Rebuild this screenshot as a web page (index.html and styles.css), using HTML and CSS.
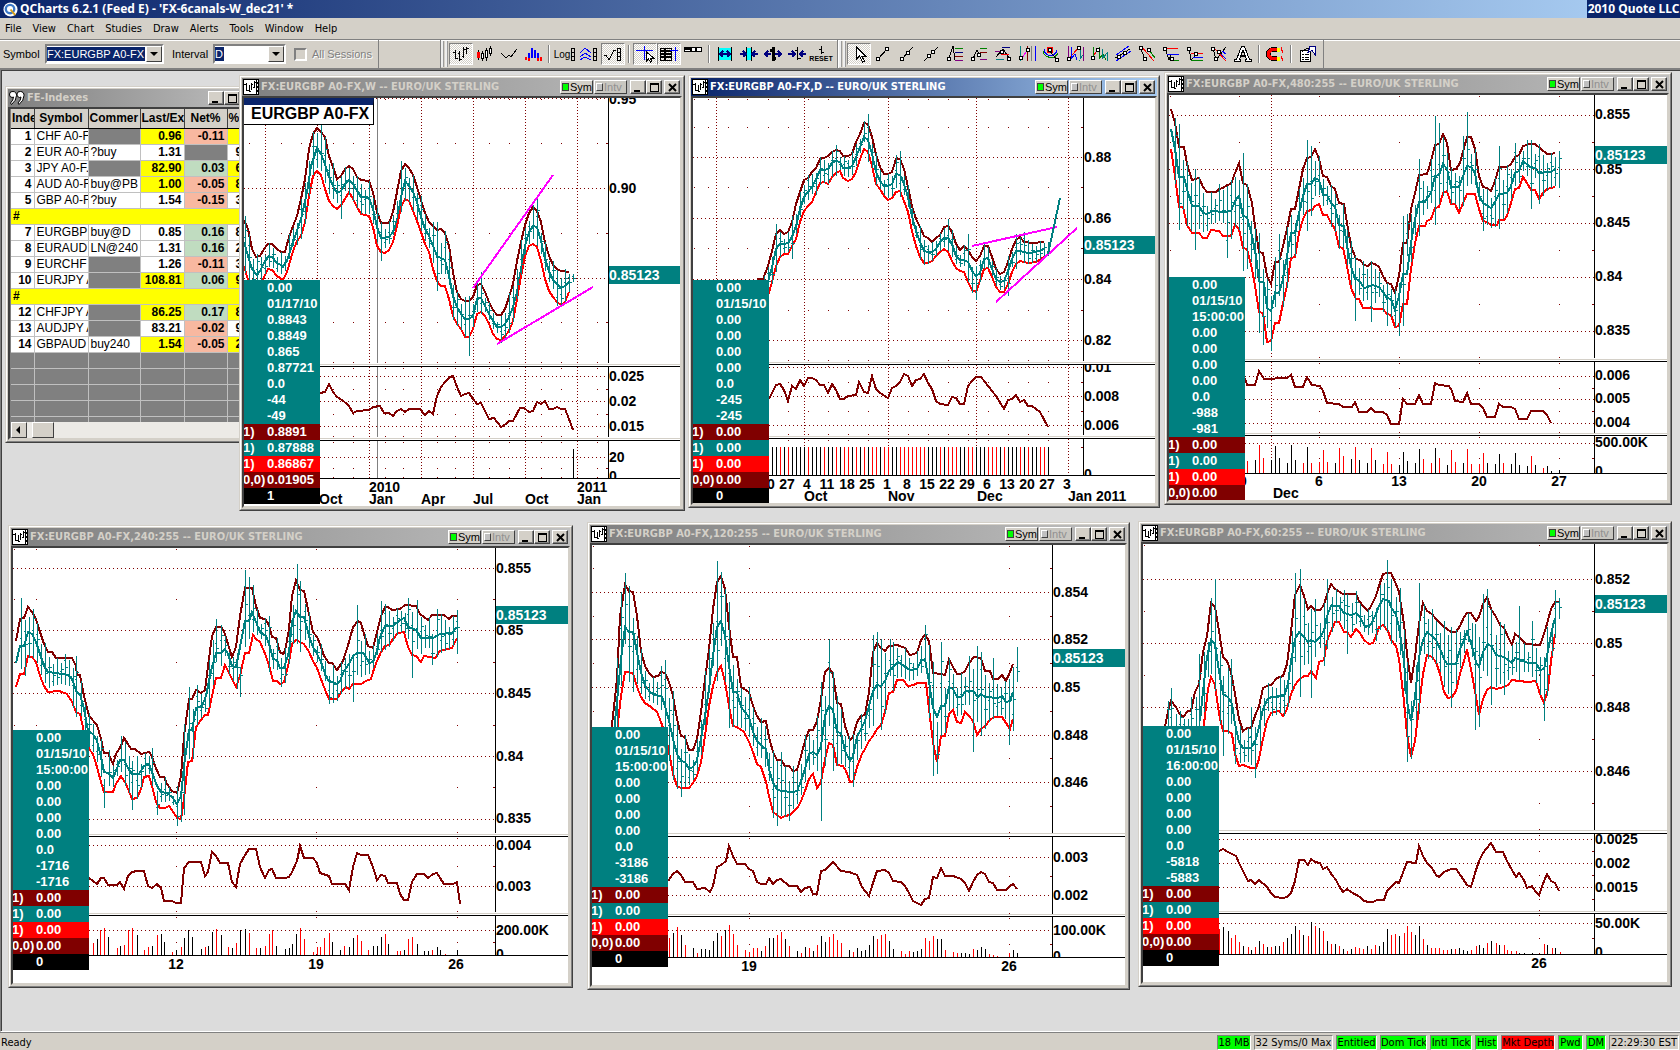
FILE: index.html
```html
<!DOCTYPE html>
<html lang="en">
<head>
<meta charset="utf-8">
<title>QCharts 6.2.1</title>
<link rel="stylesheet" href="styles.css">
</head>
<body>
<header class="app-title">
  <svg class="app-logo" viewBox="0 0 16 16"><circle cx="8" cy="8" r="7.5" fill="#fff"/><circle cx="7.500" cy="7.500" r="4.500" fill="none" stroke="#3c78c8" stroke-width="2.500"/><path d="M8 8l5 6" stroke="#d8a018" stroke-width="2"/></svg>
  <h1>QCharts 6.2.1 (Feed E) - 'FX-6canals-W_dec21' *</h1>
  <span class="brand">2010 Quote LLC</span>
</header>
<nav class="menu">
  <a href="#">File</a><a href="#">View</a><a href="#">Chart</a><a href="#">Studies</a><a href="#">Draw</a><a href="#">Alerts</a><a href="#">Tools</a><a href="#">Window</a><a href="#">Help</a>
</nav>
<div class="toolbar">
  <div class="band band-symbol">
    <label for="symbol">Symbol</label>
    <span class="combo combo-symbol"><select id="symbol"><option>FX:EURGBP A0-FX</option></select><i></i></span>
    <label for="interval" class="lbl-interval">Interval</label>
    <span class="combo combo-interval"><select id="interval"><option>D</option></select><i></i></span>
    <input type="checkbox" id="sessions" disabled><label for="sessions" class="lbl-sessions">All Sessions</label>
  </div>
  <div class="band band-chart">
    <span class="grip"></span>
    <button class="tool on" aria-label="Bars"><svg viewBox="0 0 20 20"><path d="M4.500 6v9M2 8h2M5 14h2M8.500 7v10M7 9h1M9 15h2M12.500 3v11M11 12h1M13 5h2M15.500 3v7M16 4h2"/></svg></button>
    <button class="tool" aria-label="Candles"><svg viewBox="0 0 20 20"><path d="M3.500 6v10M7.500 7v10M11.500 4v13M15.500 2v10"/><path d="M2.500 8.500h2v5h-2z" stroke="red" fill="red"/><path d="M6.500 9.500h2v5h-2zM10.500 6.500h2v7h-2zM14.500 4.500h2v5h-2z" fill="#fff"/></svg></button>
    <button class="tool" aria-label="Line"><svg viewBox="0 0 20 20"><path d="M2 9l5 5 3-3 2 2 6-8"/></svg></button>
    <button class="tool" aria-label="Histogram"><svg viewBox="0 0 20 20"><path d="M5.500 9v5M8.500 4v10M11.500 6v8M14.500 9v5" stroke="#00f" stroke-width="2"/><path d="M2.500 13v3M17.500 13v4M14.500 14v3M5.500 14v3" stroke="red" stroke-width="2"/></svg></button>
    <span class="sep"></span>
    <button class="tool wide" aria-label="Log scale"><small>Log</small><svg viewBox="0 0 6 20"><path d="M1.500 4.500h3v12h-3zM1 8h4M1 12h4"/></svg></button>
    <button class="tool" aria-label="Scale studies"><svg viewBox="0 0 20 20"><path d="M1 9l5-5 6 5M1 13l5-4 6 4M1 16l5-3 6 3" stroke="#00f"/><path d="M14.500 4.500h3v12h-3zM14 8h4M14 12h4"/></svg></button>
    <button class="tool on" aria-label="Auto scale"><svg viewBox="0 0 20 20"><path d="M1 12l2-1 3 5 5-10 2 1M14.500 4.500h3v12h-3zM14 8h4M14 12h4"/></svg></button>
    <span class="sep"></span>
    <button class="tool on" aria-label="Cursor"><svg viewBox="0 0 20 20"><path d="M1 6.500h17M9.500 2v14" stroke="#00f"/><path d="M11.500 8v9l2-2 2 3 1-1-1-3h3z" fill="#fff"/></svg></button>
    <button class="tool on" aria-label="Data window"><svg viewBox="0 0 20 20"><path d="M1.500 4.500h11v12h-11zM1 7h12M1 10h12M1 13h12M6 4v12" stroke-width="1.500"/><path d="M11 6.500h8M16.500 3v14" stroke="#00f"/></svg></button>
    <button class="tool" aria-label="Quote bar"><svg viewBox="0 0 20 20"><path d="M1.500 3.500h17v4h-17z" fill="#fff"/><path d="M2 5h6M8 3v5M13 3v5" stroke-width="2"/></svg></button>
    <span class="sep"></span>
    <button class="tool" aria-label="Expand"><svg viewBox="0 0 20 20"><path d="M3 4h14v12H3z" fill="#0ff" stroke="none"/><path d="M3.500 3v14M16.500 3v14"/><path d="M5 10h10M8 7l-3 3 3 3M12 7l3 3-3 3" stroke="#00007f" stroke-width="1.500"/></svg></button>
    <button class="tool" aria-label="Narrow"><svg viewBox="0 0 20 20"><path d="M7 4h6v12H7z" fill="#0ff" stroke="none"/><path d="M7.500 3v14M12.500 3v14"/><path d="M1 10h5M4 7l3 3-3 3M19 10h-5M16 7l-3 3 3 3" stroke="#00007f" stroke-width="1.500"/></svg></button>
    <button class="tool" aria-label="Widen bars"><svg viewBox="0 0 20 20"><path d="M10 3v14M7 6h3M10 14h3" stroke-width="3"/><path d="M2 10h6M5 7l-3 3 3 3M18 10h-6M15 7l3 3-3 3" stroke="#00007f" stroke-width="1.500"/></svg></button>
    <button class="tool" aria-label="Narrow bars"><svg viewBox="0 0 20 20"><path d="M10.500 3v13M8 6h2M11 14h3"/><path d="M1 10h6M5 7l3 3-3 3M19 10h-5M16 7l-3 3 3 3" stroke="#00007f" stroke-width="1.500"/></svg></button>
    <button class="tool reset" aria-label="Reset"><svg viewBox="0 0 20 10"><path d="M10.500 1v8M8 4h2M11 7h2"/></svg><small>RESET</small></button>
  </div>
  <div class="band band-draw">
    <span class="grip"></span>
    <button class="tool on" aria-label="Select"><svg viewBox="0 0 20 20"><path d="M7.500 3v12l3-3 3 6 2-1-3-5h4z" fill="#fff"/></svg></button>
    <button class="tool" aria-label="Segment"><svg viewBox="0 0 20 20"><path d="M5 15l9-10"/><path class="k" d="M3.500 13.500h3v3h-3zM12.500 3.500h3v3h-3z"/></svg></button>
    <button class="tool" aria-label="Ray"><svg viewBox="0 0 20 20"><path d="M4 16L16 3"/><path class="k" d="M3.500 13.500h3v3h-3zM9.500 7.500h3v3h-3z"/></svg></button>
    <button class="tool" aria-label="Line tool"><svg viewBox="0 0 20 20"><path d="M3 17L17 3"/><path class="k" d="M6.500 10.500h3v3h-3zM10.500 6.500h3v3h-3z"/></svg></button>
    <button class="tool" aria-label="Retracement"><svg viewBox="0 0 20 20"><path d="M3 17L8 2l2 14"/><path d="M10 4h8" stroke="green"/><path d="M10 8h8" stroke="#00007f"/><path d="M10 12h8" stroke="maroon"/><path d="M10 16h8" stroke="purple"/><path class="k" d="M2.500 13.500h3v3h-3z"/></svg></button>
    <button class="tool" aria-label="Extension"><svg viewBox="0 0 20 20"><path d="M3 17L8 6l3 7"/><path d="M11 4h7" stroke="green"/><path d="M11 8h7" stroke="maroon"/><path d="M11 15h7" stroke="purple"/><path class="k" d="M2.500 13.500h3v3h-3zM8.500 9.500h3v3h-3z"/></svg></button>
    <button class="tool" aria-label="Projection"><svg viewBox="0 0 20 20"><path d="M3 13l7-8 6 9"/><path d="M9 3h8" stroke="#00007f"/><path d="M2 7h8" stroke="purple"/><path d="M8 10h8" stroke="red"/><path d="M3 15h8" stroke="teal"/><path class="k" d="M7.500 6.500h3v3h-3zM14.500 13.500h3v3h-3z"/></svg></button>
    <button class="tool" aria-label="Time zones"><svg viewBox="0 0 20 20"><path d="M3.500 2v15" stroke="teal"/><path d="M5 14l6-9" stroke="#f0f"/><path d="M10.500 2v15" stroke="maroon"/><path d="M14.500 2v15" stroke="gray"/><path d="M18.500 2v15" stroke="#00f"/><path class="k" d="M2.500 12.500h3v3h-3zM9.500 4.500h3v3h-3z"/></svg></button>
    <button class="tool" aria-label="Arcs"><svg viewBox="0 0 20 20"><circle cx="9" cy="6" r="3" stroke="red"/><path d="M3 4a6 6 0 0 0 13 2" stroke="#00f"/><path d="M2 7a8 8 0 0 0 15 2" stroke="green"/><path d="M8 6l8 10"/><path class="k" d="M7.500 4.500h3v3h-3zM14.500 14.500h3v3h-3z"/></svg></button>
    <button class="tool" aria-label="Cycles"><svg viewBox="0 0 20 20"><path d="M3.500 2v15M18 3v14" stroke="purple"/><path d="M4 15l9-11" stroke="red"/><path d="M6 3v12l4-5 2 6" stroke="#00f"/><path d="M15 5v10l3-4" stroke="teal"/><path class="k" d="M2.500 13.500h3v3h-3zM12.500 2.500h3v3h-3z"/></svg></button>
    <button class="tool" aria-label="Waves"><svg viewBox="0 0 20 20"><path d="M3 15l5-9" stroke="red"/><path d="M4.500 3v13M10 3v12l4-5 3 6" stroke="green"/><path d="M13 5v10l5-6v8" stroke="teal"/><path class="k" d="M2.500 12.500h3v3h-3zM7.500 4.500h3v3h-3z"/></svg></button>
    <button class="tool" aria-label="Channel"><svg viewBox="0 0 20 20"><path d="M3 11L16 2M3 17L18 7" stroke="#00f"/><path d="M2 14L17 5"/><path class="k" d="M4.500 11.500h3v3h-3zM10.500 7.500h3v3h-3z"/></svg></button>
    <button class="tool" aria-label="Regression"><svg viewBox="0 0 20 20"><path d="M3 3l5 12"/><path d="M4 2l13 15" stroke="red"/><path d="M12 6l6 8" stroke="green"/><path class="k" d="M2.500 2.500h3v3h-3zM10.500 4.500h3v3h-3zM6.500 13.500h3v3h-3z"/></svg></button>
    <button class="tool" aria-label="Fan levels"><svg viewBox="0 0 20 20"><path d="M4 4l4 12 2-6"/><path d="M6 4h11" stroke="red"/><path d="M6 10h12" stroke="#00f"/><path d="M11 16h7" stroke="green"/><path class="k" d="M2.500 3.500h3v3h-3zM9.500 13.500h3v3h-3z"/></svg></button>
    <button class="tool" aria-label="Speed lines"><svg viewBox="0 0 20 20"><path d="M4 4l2 12 6-6"/><path d="M6 9h12" stroke="red"/><path d="M8 13h10" stroke="#00f"/><path d="M6 16h12" stroke="green"/><path class="k" d="M2.500 3.500h3v3h-3zM9.500 8.500h3v3h-3z"/></svg></button>
    <button class="tool" aria-label="Pitchfork"><svg viewBox="0 0 20 20"><path d="M4 4l3 12 10-13"/><path d="M7 6l10 9M13 7l4 3" stroke="#00f"/><path d="M5 4l12 13" stroke="red"/><path class="k" d="M2.500 3.500h3v3h-3zM8.500 6.500h3v3h-3zM5.500 13.500h3v3h-3z"/></svg></button>
    <button class="tool" aria-label="Text"><svg viewBox="0 0 20 20"><path d="M8.500 2.500h3l5 13h2v2h-6v-2h1l-1-3h-5l-1 3h1v2h-6v-2h2zM10 6l-2 5h4z" fill="#fff" fill-rule="evenodd"/></svg></button>
    <span class="sep"></span>
    <button class="tool" aria-label="Magnet"><svg viewBox="0 0 20 20"><path d="M12 5.500H8a4.500 4.500 0 0 0 0 9h4" stroke="#000" stroke-width="5"/><path d="M12 5.500H8a4.500 4.500 0 0 0 0 9h4" stroke="red" stroke-width="3.500"/><path d="M12 5.500h3M12 14.500h3" stroke="#ff0" stroke-width="4"/><path d="M17 3l-1 3 2 1-1 2M17 12l-1 2 2 1-1 2" stroke="red"/></svg></button>
    <span class="sep"></span>
    <button class="tool" aria-label="Properties"><svg viewBox="0 0 20 20"><path d="M3.500 6.500h10v11h-10z" fill="#fff"/><path d="M5 10h2M8 10h4M5 13h2M8 13h4M5 15h2M8 15h4M5 8l5-4h4"/><path d="M13 2.500h5v8l-3-4-4 2z" fill="#fff" stroke="#00007f"/></svg></button>
  </div>
</div>
<main class="desktop" id="desktop">
  <section class="win win-index">
    <header class="win-title">
      <svg class="win-icon" viewBox="0 0 16 16"><g fill="#fff" stroke="#000"><path d="M4 1.500a3 3 0 0 0-1 6l1.500-.5q0 3-3 6l1 1.500q5-4 5-9a3.500 3.500 0 0 0-3.500-4z"/><path d="M11.500 1.500a3 3 0 0 0-1 6l1.500-.5q0 3-3 6l1 1.500q5-4 5-9a3.500 3.500 0 0 0-3.500-4z"/></g></svg>
      <h2>FE-Indexes</h2>
      <button class="cap" aria-label="Minimize"><b class="g-min"></b></button><button class="cap" aria-label="Maximize"><b class="g-max"></b></button><button class="cap close" aria-label="Close"><svg viewBox="0 0 9 9"><path d="M1 1l7 7M8 1L1 8"/></svg></button>
    </header>
    <div class="client sheet">
      <table class="quotes">
        <colgroup><col class="c1"><col class="c2"><col class="c3"><col class="c4"><col class="c5"><col class="c6"></colgroup>
        <thead><tr><th>Inde</th><th>Symbol</th><th>Commer</th><th>Last/Ex</th><th>Net%</th><th>%</th></tr></thead>
        <tbody id="quotes"></tbody>
      </table>
      <div class="scroll"><button aria-label="Scroll left"><i></i></button><span class="thumb"></span></div>
    </div>
  </section>
</main>
<footer class="status">
  <span class="ready">Ready</span>
  <span class="cell ok w34">18 MB</span><span class="cell w79">32 Syms/0 Max</span><span class="cell ok w41">Entitled</span><span class="cell ok w47">Dom Tick</span><span class="cell ok w42">Intl Tick</span><span class="cell ok w23">Hist</span><span class="cell bad w54">Mkt Depth</span><span class="cell ok w25">Pwd</span><span class="cell ok w20">DM</span><span class="cell w70">22:29:30 EST</span>
</footer>
<script src="charts.js"></script>
</body>
</html>
```
FILE: styles.css
```css
* { box-sizing: border-box; }
:root {
  --face: #d4d0c8;
  --navy: #0a246a;
  --ui: "DejaVu Sans Condensed", "DejaVu Sans", sans-serif;
  --arial: "Liberation Sans", Arial, sans-serif;
}
html, body { height: 100%; margin: 0; }
body { display: flex; flex-direction: column; background: var(--face); font: 11px var(--ui); color: #000; overflow: hidden; }
h1, h2 { margin: 0; font-size: inherit; }
button { font: inherit; color: inherit; padding: 0; margin: 0; border: 0; background: var(--face); }

.app-title { flex: none; height: 18px; display: flex; align-items: center; padding-left: 3px; gap: 2px; color: #fff; background: linear-gradient(90deg, #0a246a, #a6caf0 95%); }
.app-logo { width: 15px; height: 15px; }
.app-title h1 { flex: 1; font: bold 12px/18px "Noto Sans", sans-serif; white-space: nowrap; }
.brand { width: 93px; background: var(--navy); font: bold 12px/18px "Noto Sans", sans-serif; text-align: center; white-space: nowrap; }
.menu { flex: none; height: 21px; display: flex; gap: 11px; padding-left: 5px; line-height: 21px; }
.menu a { color: #000; text-decoration: none; }

.toolbar { flex: none; height: 30px; display: flex; border-top: 1px solid #808080; border-bottom: 1px solid #808080; box-shadow: inset 0 1px #fff; }
.band { display: flex; align-items: center; border-right: 1px solid #808080; }
.band-symbol { width: 379px; padding-left: 3px; font: 11px var(--arial); }
.band-symbol label { width: 42px; }
.band-symbol .lbl-interval { margin-left: 8px; width: 41px; }
.band-symbol .lbl-sessions { margin-left: 5px; width: 64px; color: #808080; text-shadow: 1px 1px #fff; }
.band-symbol input { appearance: none; margin: 0 0 0 8px; width: 13px; height: 13px; border: 2px solid; border-color: #808080 #fff #fff #808080; background: var(--face); }
.combo { position: relative; height: 20px; display: flex; border: 2px solid; border-color: #808080 #fff #fff #808080; background: #fff; }
.combo-symbol { width: 119px; }
.combo-interval { width: 73px; }
.combo select { flex: 1; min-width: 0; appearance: none; border: 0; margin: 1px 0; padding: 0; color: #fff; font: 11px var(--arial); background: linear-gradient(var(--navy), var(--navy)) 0 0 no-repeat; }
.combo-symbol select { background-size: 98px 14px; }
.combo-interval select { background-size: 9px 14px; }
.combo i { position: absolute; right: 0; top: 0; width: 16px; height: 16px; background: var(--face); border: 1px solid; border-color: #fff #404040 #404040 #fff; pointer-events: none; }
.combo i::after { content: ""; position: absolute; left: 3px; top: 5px; border: 4px solid transparent; border-top-color: #000; border-bottom: 0; }
.band-chart { width: 398px; margin-left: 61px; border-left: 1px solid #808080; }
.band-draw { width: 486px; border-left: 1px solid #fff; }
.grip { flex: none; width: 7px; height: 26px; margin-right: 1px; border: 2px ridge #eee; border-width: 0 3px; }
.tool { flex: none; width: 24px; height: 22px; display: flex; align-items: center; justify-content: center; }
.tool.on { border: 1px solid; border-color: #808080 #fff #fff #808080; background: repeating-conic-gradient(#fff 0 25%, #d4d0c8 0 50%) 0 0 / 2px 2px; }
.tool svg { flex: none; width: 20px; height: 20px; fill: none; stroke: #000; shape-rendering: crispEdges; }
.tool .k { fill: #fff; }
.tool small { font: 10px var(--arial); }
.tool.wide svg { width: 6px; }
.tool.reset { flex-direction: column; }
.tool.reset svg { height: 10px; }
.tool.reset small { font: bold 7px/8px var(--arial); }
.sep { flex: none; width: 2px; height: 18px; margin: 0 3px; background: #808080; border-right: 1px solid #fff; }

.desktop { flex: 1; position: relative; overflow: hidden; background: #dcdcdc; border: 1px solid #808080; border-right: 0; border-bottom-color: #fff; box-shadow: inset 1px 1px #404040; }
.win { position: absolute; display: flex; flex-direction: column; padding: 1px; background: var(--face); border: 1px solid; border-color: var(--face) #404040 #404040 var(--face); }
.win::before { content: ""; position: absolute; inset: 0; border: 1px solid; border-color: #fff #808080 #808080 #fff; pointer-events: none; }
.win-index { left: 4px; top: 16px; width: 258px; height: 357px; }
.win-w { left: 238px; top: 5px; width: 446px; height: 436px; }
.win-d { left: 687px; top: 5px; width: 472px; height: 433px; }
.win-480 { left: 1163px; top: 2px; width: 508px; height: 433px; }
.win-240 { left: 7px; top: 455px; width: 565px; height: 463px; }
.win-120 { left: 586px; top: 452px; width: 543px; height: 468px; }
.win-60 { left: 1137px; top: 451px; width: 534px; height: 466px; }
.win-title { flex: none; height: 18px; margin: 1px 1px; display: flex; align-items: center; padding: 0 2px 0 1px; background: linear-gradient(90deg, #808080, #c0c0c0); color: var(--face); }
.win-title + .client { margin-top: -1px; }
.win-title.active { background: linear-gradient(90deg, #0a246a, #a6caf0); color: #fff; }
.win-title h2 { flex: 1; min-width: 0; overflow: hidden; white-space: nowrap; font: bold 11px/18px var(--ui); }
.win-icon { flex: none; width: 16px; height: 16px; margin-right: 2px; }
.cap { flex: none; width: 16px; height: 14px; display: flex; justify-content: center; align-items: center; border: 1px solid; border-color: #fff #404040 #404040 #fff; box-shadow: inset -1px -1px #808080; }
.cap.close { margin-left: 2px; }
.cap svg { width: 9px; height: 9px; stroke: #000; stroke-width: 2; }
.g-min { width: 6px; height: 2px; background: #000; margin: 7px 3px 0 0; }
.g-max { width: 9px; height: 9px; border: 1px solid #000; border-top-width: 2px; }
.link { flex: none; width: 33px; height: 14px; margin-right: 1px; padding-left: 1px; display: flex; align-items: center; gap: 1px; font: 11px/12px var(--arial); border: 1px solid; border-color: #fff #404040 #404040 #fff; color: #000; white-space: nowrap; }
.link i { flex: none; width: 7px; height: 8px; background: #0f0; border: 1px solid #404040; }
.link.off { color: #909090; background: #c8c6c0; margin-right: 3px; }
.link.off i { background: #c0c0c0; border-color: #fff #404040 #404040 #fff; }
.client { flex: 1; min-height: 0; position: relative; margin: 0 1px 1px; border: 2px solid; border-color: #404040 var(--face) var(--face) #404040; background: #fff; overflow: hidden; }
.plot { display: block; width: 100%; height: 100%; shape-rendering: crispEdges; }
.plot text { font: bold 14px var(--arial); }
.caption { position: absolute; left: 0; top: 0; width: 130px; height: 27px; border: 1px solid #000; border-width: 0 1px 1px 0; border-top: 7px solid var(--navy); background: #fff; font: bold 16px/18px var(--arial); padding-left: 7px; white-space: nowrap; }

.data { position: absolute; left: 0; width: 76px; border-collapse: collapse; color: #fff; font: bold 13px/16px var(--arial); table-layout: fixed; }
.data tr { height: 16px; background: teal; }
.data th, .data td { padding: 0; text-align: left; white-space: nowrap; overflow: hidden; }
.data th { width: 23px; text-indent: -1px; }
.data .m { background: maroon; }
.data .r { background: red; }
.data .b { background: #000; }
.at-182 { top: 182px; }

.sheet { display: flex; flex-direction: column; background: #808080; padding-left: 1px; }
.quotes { flex: none; width: 262px; border-collapse: collapse; table-layout: fixed; font: 12px/14px var(--arial); }
.quotes .c1 { width: 23px; } .quotes .c2 { width: 54px; } .quotes .c3 { width: 52px; } .quotes .c4 { width: 44px; } .quotes .c5 { width: 43px; }
.quotes th { height: 19px; padding: 0 1px; background: var(--face); border-right: 1px solid #404040; border-bottom: 1px solid #000; overflow: hidden; white-space: nowrap; text-align: left; text-overflow: clip; }
.quotes th:nth-child(2), .quotes th:nth-child(5) { text-align: center; }
.quotes td { height: 16px; padding: 0 2px; border: solid #c0c0c0; border-width: 0 1px 1px 0; background: #fff; overflow: hidden; white-space: nowrap; }
.quotes tr > td:nth-child(1), .quotes tr > td:nth-child(4), .quotes tr > td:nth-child(5) { text-align: right; font-weight: bold; }
.quotes tr > td:nth-child(6) { font-weight: bold; padding-left: 8px; }
.quotes td.y, .quotes td.note { background: #ff0; }
.quotes tr > td.note { text-align: left; }
.quotes td.up { background: #c0dcc0; }
.quotes td.dn { background: #f8b8a0; }
.quotes td.g { background: #808080; }
.scroll { position: absolute; left: 1px; right: 0; bottom: 0; height: 16px; display: flex; gap: 5px; background: #eceae6; }
.scroll button, .thumb { width: 16px; height: 16px; border: 1px solid; border-color: #fff #404040 #404040 #fff; }
.thumb { width: 22px; background: var(--face); }
.scroll i { display: block; width: 0; margin: 0 4px; border: 4px solid transparent; border-right-color: #000; border-left: 0; }

.status { flex: none; height: 18px; display: flex; align-items: center; gap: 3px; padding: 1px 1px 0; white-space: nowrap; border-top: 1px solid #808080; }
.ready { flex: 1; }
.cell { height: 15px; line-height: 14px; text-align: center; border: 1px solid; border-color: #808080 #fff #fff #808080; overflow: hidden; }
.ok { background: #0f0; } .bad { background: red; }
.w20 { width: 20px; } .w23 { width: 23px; } .w25 { width: 25px; } .w34 { width: 34px; } .w41 { width: 41px; } .w42 { width: 42px; } .w47 { width: 47px; } .w54 { width: 54px; } .w70 { width: 70px; } .w79 { width: 79px; }
```
FILE: charts.js
```js
// Quote sheet: index, symbol, comment, last, net%, %, last highlighted
const quotes = [
  [1, 'CHF A0-F.', '', '0.96', '-0.11', '', 1], [2, 'EUR A0-F', '?buy', '1.31', '', '9', 0],
  [3, 'JPY A0-F.', '', '82.90', '0.03', '6', 1], [4, 'AUD A0-F', 'buy@PB', '1.00', '-0.05', '8', 1],
  [5, 'GBP A0-F', '?buy', '1.54', '-0.15', '3', 0], '#',
  [7, 'EURGBP A', 'buy@D', '0.85', '0.16', '8', 0], [8, 'EURAUD A', 'LN@240', '1.31', '0.16', '2', 0],
  [9, 'EURCHF A', '', '1.26', '-0.11', '3', 0], [10, 'EURJPY A', '', '108.81', '0.06', '9', 1], '#',
  [12, 'CHFJPY A', '', '86.25', '0.17', '8', 1], [13, 'AUDJPY A', '', '83.21', '-0.02', '9', 0],
  [14, 'GBPAUD', 'buy240', '1.54', '-0.05', '2', 1], null, null, null, null, null
];
document.getElementById('quotes').innerHTML = quotes.map(q => {
  if (q === '#') return '<tr><td class="note" colspan="6">#</td></tr>';
  if (!q) return '<tr>' + '<td class="g"></td>'.repeat(6) + '</tr>';
  const y = q[6] ? 'y' : '', n = !q[4] ? 'g' : q[4][0] === '-' ? 'dn' : 'up';
  return `<tr><td>${q[0]}</td><td>${q[1]}</td><td class="${q[2] ? '' : 'g'}">${q[2]}</td><td class="${y}">${q[3]}</td><td class="${n}">${q[4]}</td><td class="${y}">${q[5]}</td></tr>`;
}).join('');

// Each chart is plotted in its own units; u = [origin x, origin y, units per pixel x, units per pixel y]
const charts = [
{ id: 'w', name: 'W', u: [12, 87, 3, 3], caption: 'EURGBP A0-FX', axis: 1103, start: 14, end: 986,
  panes: [[87, 882], [893, 1104], [1116, 1227]], seps: [885, 1107], major: [[88, 358, 628], [922, 997, 1072], [1165]], minor: [[223, 493, 760], [960, 1035], [1197]],
  vmaj: [74, 230, 386, 542, 698, 854, 1010], vmin: [26, 122, 182, 278, 338, 434, 490, 590, 646, 746, 806, 902, 962, 1070], solid: 410,
  up: '12,452 24,480 36,540 48,563 60,560 72,540 84,525 96,524 110,540 122,549 134,549 146,505 160,470 172,440 184,390 194,330 206,240 218,195 230,177 242,190 254,205 266,262 278,295 290,331 302,322 314,300 326,290 338,300 350,325 362,332 386,337 398,370 410,430 422,462 446,461 458,430 470,370 482,305 494,285 506,298 518,318 530,355 542,392 554,432 566,458 578,470 590,482 602,480 614,492 626,530 638,610 650,670 662,690 674,696 686,695 698,685 710,648 722,646 734,670 746,700 758,722 770,738 782,738 794,720 806,685 818,645 830,575 842,520 854,468 866,432 878,413 890,425 902,460 914,520 926,560 938,588 950,600 962,605 986,609',
  mid: '12,520 24,560 36,600 50,617 60,605 72,582 84,565 96,563 110,583 128,591 140,575 160,520 184,450 200,370 214,290 230,238 242,255 254,285 266,325 278,350 290,373 302,365 314,345 326,333 338,345 350,365 362,383 386,388 398,420 410,475 422,507 446,504 458,490 470,455 482,385 494,337 506,350 518,370 530,400 542,445 554,480 566,500 578,530 590,560 614,572 626,620 638,680 650,715 662,735 674,750 686,750 698,740 710,690 722,688 734,710 746,735 758,755 770,774 782,775 794,765 806,745 818,715 830,670 842,600 854,530 866,490 878,470 890,475 902,515 914,570 926,605 938,632 950,645 962,656 974,650 986,638',
  low: '12,590 24,632 36,665 60,650 72,625 84,600 96,602 110,620 128,633 140,610 160,545 172,515 184,500 194,460 206,380 218,320 230,305 242,318 254,360 266,395 278,410 290,420 302,408 314,390 326,370 338,390 350,415 362,434 386,440 398,475 410,530 422,550 434,552 446,543 458,520 470,470 482,415 494,390 506,395 518,425 530,455 542,490 554,525 566,548 578,600 590,635 602,650 614,652 626,690 638,740 650,765 662,780 674,803 686,803 698,780 710,735 722,728 734,740 746,765 758,795 770,810 782,812 794,800 806,785 818,755 830,690 842,620 854,560 866,532 878,524 890,535 902,575 914,630 926,665 938,685 950,700 962,708 974,700 986,668',
  spikes: {242:[168,305],302:[320,450],422:[460,575],482:[275,430],590:[460,665],686:[680,860],722:[610,735],782:[740,822],890:[387,530],998:[615,640]},
  drawn: [['#f0f', '698,657 940,318'], ['#f0f', '770,825 1060,653']],
  atr: '240,973 254,970 266,945 280,968 292,983 306,993 320,1006 328,1012 338,1033 352,1027 386,1022 400,1014 420,1011 432,1031 446,1033 458,1041 470,1027 482,1019 494,1030 506,1020 540,1021 554,1038 566,1025 578,1036 582,1020 590,980 604,955 616,940 630,923 638,921 650,955 662,982 674,975 686,972 698,990 710,1004 722,1002 734,1027 746,1050 762,1048 782,1074 798,1065 806,1056 820,1055 840,1017 852,1017 866,1029 878,1025 890,1000 902,1004 914,996 926,1019 938,1019 950,1014 962,1019 974,1019 986,1050 998,1083',
  vol: '998,1140b', ylab: [[90, '0.95'], [357, '0.90'], [922, '0.025', 1], [997, '0.02', 1], [1072, '0.015', 1], [1164, '20', 2], [1222, '0', 2]], tag: 590,
  xl: [[386, 1253, '2010'], [1010, 1253, '2011'], [236, 1290, 'Oct'], [386, 1290, 'Jan'], [542, 1290, 'Apr'], [700, 1290, 'Jul'], [856, 1290, 'Oct'], [1012, 1290, 'Jan']], xc: [],
  data: ['0.00', '01/17/10', '0.8843', '0.8849', '0.865', '0.87721', '0.0', '-44', '-49'], bands: ['0.8891', '0.87888', '0.86867', '0.01905'], last: '1' },
{ id: 'd', name: 'D', active: 1, u: [24, 87, 3, 3], axis: 1193, start: 236, end: 1076,
  panes: [[87, 876], [887, 1098], [1109, 1219]], seps: [879, 1100], major: [[265, 448, 631, 814], [895, 982, 1069], []], minor: [[175, 355, 538, 722], [940, 1026], [1135]],
  vmaj: [92, 356, 608, 872, 1148], vmin: [26, 68, 128, 187, 248, 308, 368, 428, 488, 548, 668, 728, 788, 848, 908, 968, 1028, 1088],
  up: '215,631 235,631 248,590 260,545 272,495 284,482 296,495 308,490 320,460 332,405 344,370 356,332 368,328 380,310 392,298 404,270 416,268 430,262 442,248 454,242 464,246 474,262 488,261 500,255 512,220 524,195 536,162 548,165 560,205 572,255 584,295 596,315 608,315 620,308 632,270 644,269 656,300 668,355 680,410 692,450 704,475 716,502 728,508 740,520 752,508 764,498 776,473 788,470 800,490 812,525 824,543 836,530 848,542 860,565 872,575 884,560 896,530 908,532 920,565 932,600 944,615 956,608 968,580 980,540 992,512 1004,505 1016,518 1040,521 1076,519',
  mid: '248,640 260,595 272,540 284,525 296,525 308,523 320,505 332,470 344,420 356,385 380,355 392,330 404,303 416,302 430,300 442,282 454,275 464,280 474,297 488,297 500,290 512,265 524,235 536,203 548,212 560,255 572,310 584,335 596,350 608,352 620,345 632,315 644,318 656,345 668,385 680,440 692,485 704,520 716,545 728,548 740,549 752,540 764,520 776,508 788,508 800,525 812,560 824,572 836,573 848,580 860,605 872,622 884,612 896,570 908,568 920,600 932,630 944,640 956,635 968,605 980,570 992,545 1004,545 1028,552 1052,548 1076,541',
  low: '248,680 260,640 272,590 284,565 296,555 308,554 320,530 332,510 344,460 356,425 368,412 380,400 392,370 404,343 416,338 428,345 440,325 454,312 464,307 474,328 488,335 500,330 512,310 524,270 536,240 548,250 560,290 572,345 584,360 596,380 608,392 620,388 632,368 644,367 656,395 668,430 680,485 692,530 704,565 716,582 728,581 740,577 752,562 764,550 776,540 788,550 800,575 812,598 824,607 836,610 848,640 860,663 872,668 884,635 896,600 908,598 920,625 932,655 944,670 956,668 968,645 980,610 992,585 1004,577 1028,581 1052,578 1076,564',
  spikes: {548:[135,280],272:[465,610],452:[228,320],644:[246,385],788:[450,545],848:[495,640],872:[590,692],1016:[488,582],992:[495,600],320:[440,570],968:[560,680],1088:[520,560]},
  drawn: [['#f0f', '860,532 1115,473'], ['#f0f', '932,700 1175,476'], ['teal', '1088,555 1108,470 1126,388']],
  atr: '252,990 272,948 286,946 296,962 308,995 320,950 332,960 344,933 356,952 368,928 380,928 392,934 404,948 416,948 428,972 440,944 452,962 464,990 476,990 488,982 512,978 522,938 536,968 548,972 560,922 572,960 584,972 608,988 620,958 632,952 644,940 656,915 668,922 680,950 692,932 704,930 716,916 728,942 740,960 752,995 764,1005 788,1008 800,983 812,988 824,1004 836,1005 848,952 860,935 872,924 888,924 900,938 920,965 934,982 956,1020 968,992 980,990 992,978 1004,1000 1016,992 1028,1010 1040,1012 1064,1028 1088,1074',
  vol: [...'bbrbrbbbbrbbbrbbrbrrbrbrbrrbrrbbrrrrrrrbbbrbrrrbbrrbbbrrrbrbbbrbrbbrrb'].map((c, i) => `${260 + 12 * i},1135${c}`).join(' '),
  ylab: [[264, '0.88'], [447, '0.86'], [630, '0.84'], [812, '0.82'], [895, '0.01', 1], [981, '0.008', 1], [1068, '0.006', 1], [1214, '0', 2]], tag: 502,
  xl: [[358, 1281, 'Oct'], [610, 1281, 'Nov'], [875, 1281, 'Dec'], [1150, 1281, 'Jan 2011']],
  xc: [[258, 1245, '0'], [306, 1245, '27'], [367, 1245, '4'], [426, 1245, '11'], [486, 1245, '18'], [547, 1245, '25'], [606, 1245, '1'], [666, 1245, '8'], [727, 1245, '15'], [787, 1245, '22'], [847, 1245, '29'], [906, 1245, '6'], [967, 1245, '13'], [1027, 1245, '20'], [1086, 1245, '27'], [1146, 1245, '3']],
  data: ['0.00', '01/15/10', '0.00', '0.00', '0.00', '0.00', '0.0', '-245', '-245'] },
{ id: '480', name: '480:255', u: [27, 77, 3, 3], axis: 1303, start: 46, end: 1186,
  panes: [[77, 866], [879, 1090], [1101, 1210]], seps: [869, 1091], major: [[136, 298, 460, 622, 784], [919, 989, 1060], [1120]], minor: [[217, 379, 541, 703], [955, 1025], [1165]],
  vmaj: [334], vmin: [29, 238, 478, 718, 958, 1198],
  up: '33,118 45,160 58,232 72,234 80,285 95,332 117,326 130,352 142,369 167,369 178,358 190,356 202,347 214,343 226,310 238,282 250,342 262,347 275,400 285,470 298,548 310,552 322,620 334,645 346,578 358,578 370,530 382,480 394,418 406,418 418,360 430,300 442,267 454,264 466,240 478,270 490,320 502,322 514,350 526,358 538,400 552,404 562,460 574,530 588,568 600,572 612,588 624,590 634,580 645,583 658,592 670,620 682,641 694,644 706,672 718,620 730,522 742,521 754,420 766,370 778,318 800,315 812,275 826,228 838,224 850,194 862,220 874,303 888,300 900,280 912,235 922,204 934,204 946,240 958,320 970,352 982,355 994,366 1006,335 1018,294 1042,292 1054,285 1066,262 1078,258 1090,230 1110,224 1126,224 1142,240 1160,253 1172,255 1186,251',
  mid: '33,180 45,240 58,323 72,324 82,360 95,410 117,411 130,430 142,435 160,426 190,428 214,424 226,395 238,380 250,440 262,442 275,500 288,560 298,635 312,640 322,715 334,726 346,670 358,672 370,630 382,560 394,492 406,491 418,430 430,380 442,345 454,343 466,325 478,332 490,376 502,378 514,400 526,412 538,468 552,470 562,530 574,590 586,628 598,632 612,655 624,653 636,646 658,652 670,668 682,687 694,688 706,722 718,680 730,615 742,613 754,520 766,450 778,397 796,394 812,370 826,320 838,317 850,285 862,300 874,353 898,352 910,320 922,290 934,292 946,310 958,380 970,400 994,416 1006,398 1018,373 1042,370 1054,350 1066,310 1078,305 1090,275 1110,292 1126,295 1138,311 1160,309 1174,307 1186,300',
  low: '33,240 45,320 58,412 70,414 82,468 95,490 117,491 130,506 142,506 154,483 178,485 190,499 214,499 226,468 238,480 250,536 262,540 275,600 286,650 298,728 308,730 322,818 334,815 346,762 358,762 370,700 382,650 394,565 406,563 418,490 430,450 442,425 456,422 466,410 478,405 490,438 502,438 514,462 526,480 538,533 550,535 562,590 574,655 588,690 598,690 610,715 670,718 682,735 694,738 706,772 718,770 730,705 742,703 754,600 766,520 778,470 794,470 802,455 814,450 826,416 838,412 850,372 862,366 874,405 884,405 898,430 910,400 922,375 946,375 958,420 970,455 982,458 994,468 1010,466 1018,453 1032,453 1042,440 1054,400 1066,358 1078,355 1090,322 1100,340 1114,362 1126,363 1138,390 1150,370 1162,360 1186,353',
  spikes: {58:[165,482],106:[298,543],202:[350,567],250:[250,605],262:[345,600],298:[490,790],310:[600,828],334:[680,845],358:[495,680],442:[212,485],454:[230,440],586:[560,755],634:[575,758],646:[600,700],682:[640,770],718:[640,800],730:[440,770],742:[435,560],778:[268,500],826:[140,466],838:[160,405],910:[200,410],922:[127,350],970:[360,486],1018:[230,480],1066:[222,350],1114:[213,418],1198:[245,355]},
  drawn: [],
  atr: '255,925 262,948 286,948 298,905 312,930 380,927 392,917 404,953 430,954 442,922 455,948 480,949 490,965 500,1002 538,1003 550,1014 576,1014 586,998 598,1029 622,1028 634,1016 646,1029 670,1029 682,1038 694,1065 718,1065 730,990 742,1004 766,1005 778,978 790,1004 814,1004 826,941 838,947 868,949 876,965 886,996 910,997 922,972 934,1004 958,1005 970,1015 982,1044 1006,1044 1018,1005 1030,1014 1054,1014 1066,1020 1078,1049 1102,1050 1114,1026 1150,1026 1162,1038 1174,1060',
  vol: '262,1176r 286,1173b 298,1128r 310,1167r 334,1173b 346,1131b 358,1166b 382,1182b 394,1128b 406,1173b 430,1182r 442,1134b 454,1182r 478,1179r 490,1143r 502,1179r 526,1182b 538,1137r 550,1161r 574,1170b 586,1134r 598,1173b 622,1182b 634,1137r 646,1173b 670,1185r 682,1149r 694,1185r 718,1188b 730,1149b 742,1176b 766,1182b 778,1140b 790,1170r 814,1182r 826,1137b 838,1167r 862,1188b 874,1143r 886,1179r 910,1182b 922,1140r 934,1185r 958,1185r 970,1152r 982,1182b 1006,1185b 1018,1155b 1030,1182r 1054,1185b 1066,1152b 1078,1188b 1102,1191b 1114,1161r 1126,1188b 1150,1197r 1162,1191b 1174,1205b 1198,1203b',
  ylab: [[134, '0.855'], [298, '0.85'], [459, '0.845'], [620, '0.84'], [782, '0.835'], [917, '0.006', 1], [987, '0.005', 1], [1058, '0.004', 1], [1118, '500.00K', 2], [1206, '0', 2]], tag: 231,
  xl: [[338, 1272, 'Dec']], xc: [[248, 1235, '0'], [478, 1235, '6'], [718, 1235, '13'], [958, 1235, '20'], [1197, 1235, '27']],
  data: ['0.00', '01/15/10', '15:00:00', '0.00', '0.00', '0.00', '0.00', '0.0', '-988', '-981'] },
{ id: '240', name: '240:255', u: [35, 87, 2.7034, 3], axis: 1339, start: 55.3, end: 1226,
  panes: [[87, 942], [954, 1180], [1191, 1309]], seps: [944, 1181], major: [[148, 334, 523, 712, 901], [979, 1102], [1234]], minor: [[241, 430, 619, 805], [1042], [1270]],
  vmaj: [], vmin: [37, 98, 477, 855, 1234],
  up: '43,365 54,300 65,298 76,263 87,278 98,300 108,340 120,375 130,399 140,400 150,416 195,417 205,440 208,468 216,468 228,530 240,590 262,618 272,660 282,702 292,703 304,736 314,705 326,680 336,656 346,675 354,690 365,690 380,706 404,699 412,712 420,740 432,773 442,775 452,795 465,815 478,822 488,770 498,650 510,540 520,540 530,512 542,521 553,512 563,440 574,350 585,324 596,323 606,335 617,375 628,415 639,385 650,290 661,207 682,207 693,260 704,298 715,300 726,318 736,354 747,356 758,400 764,405 771,395 780,330 790,230 801,182 812,212 823,215 834,285 845,340 856,355 866,375 877,410 888,432 898,432 910,453 926,425 942,370 953,325 968,307 975,312 985,345 996,380 1007,388 1018,340 1029,290 1040,263 1050,265 1060,273 1080,270 1094,257 1125,260 1135,285 1158,303 1168,288 1200,288 1213,300 1222,292 1236,290',
  mid: '43,433 54,382 65,380 76,340 87,345 98,370 108,405 120,440 130,458 150,462 184,468 195,480 208,523 216,525 228,570 238,635 250,645 262,665 272,715 282,760 292,762 304,776 314,755 325,722 336,722 346,748 358,765 376,766 390,740 403,734 412,760 425,800 436,818 450,822 464,835 478,855 488,830 498,740 510,632 520,632 531,568 546,562 558,530 570,455 585,402 596,402 607,390 617,405 628,442 639,445 650,385 661,307 672,305 682,280 693,310 704,340 720,352 730,385 738,420 748,422 758,447 768,448 780,400 790,310 801,275 812,293 823,295 834,350 845,385 858,405 870,435 880,475 890,486 910,495 920,485 930,455 942,435 953,410 966,402 980,403 990,415 997,432 1007,430 1018,395 1028,355 1040,320 1062,321 1080,303 1092,298 1104,325 1125,332 1137,356 1170,357 1190,345 1222,341 1234,325',
  low: '43,503 54,465 65,465 76,412 87,414 97,430 108,470 118,500 130,520 160,516 182,525 195,550 206,580 217,585 228,640 240,690 250,705 262,745 272,790 282,820 304,820 314,795 326,770 340,795 358,840 370,838 380,810 390,775 403,772 412,800 422,850 432,867 446,867 458,860 466,872 478,898 488,900 498,840 509,728 520,727 531,625 542,603 553,588 563,588 574,530 585,478 596,476 607,438 617,455 628,480 639,505 650,470 661,402 672,402 683,347 693,360 704,370 720,410 730,450 738,485 748,487 758,495 768,490 780,430 790,375 801,362 823,375 834,400 845,425 858,448 870,490 880,520 888,541 911,541 922,520 934,505 942,510 953,495 975,495 990,485 1002,480 1010,450 1020,425 1030,400 1040,380 1052,377 1062,360 1075,342 1092,340 1104,385 1115,408 1125,410 1137,430 1147,412 1175,417 1190,395 1222,387 1234,358',
  spikes: {56:[238,450],206:[410,595],282:[780,868],326:[652,760],358:[725,872],412:[687,800],425:[815,888],478:[800,921],498:[615,888],510:[505,720],585:[300,430],650:[445,533],661:[154,385],672:[173,360],802:[135,375],812:[185,400],726:[290,460],888:[470,555],953:[410,550],964:[258,468],1029:[245,400],1104:[237,360],1115:[280,477],1169:[345,437],1180:[270,415],1234:[273,405]},
  drawn: [],
  atr: '241,1077 262,1095 272,1077 282,1077 293,1098 315,1098 325,1088 336,1110 347,1072 358,1060 370,1055 390,1055 401,1100 412,1108 423,1095 434,1107 444,1145 466,1147 477,1152 488,1151 498,1048 510,1030 542,1028 553,1072 563,1060 574,1000 585,1010 595,1031 617,1032 628,1090 639,1104 650,1035 661,1007 672,990 693,990 704,1045 715,1077 727,1053 736,1050 747,1077 770,1077 780,1073 790,1060 802,1025 812,980 823,1016 845,1018 856,1033 866,1063 888,1070 898,1095 932,1095 942,1112 953,1045 964,1001 975,1007 996,1008 1007,1045 1018,1083 1029,1067 1040,1070 1048,1091 1072,1092 1082,1125 1093,1142 1104,1142 1115,1088 1127,1065 1147,1065 1158,1078 1170,1065 1180,1061 1190,1078 1200,1095 1225,1095 1234,1090 1244,1155',
  vol: '250,1272r 261,1260b 271,1234r 282,1228r 293,1253b 315,1287r 325,1280b 336,1278r 347,1234r 358,1228r 369,1247b 390,1293r 401,1285r 412,1282b 423,1247r 434,1245b 444,1270b 466,1299r 477,1293b 488,1285r 498,1256b 509,1234b 520,1253b 542,1290b 553,1283r 563,1282b 574,1239b 585,1230r 596,1247b 617,1284r 628,1288b 639,1273r 650,1234b 661,1230b 672,1241r 693,1288r 704,1287b 715,1282r 726,1245r 736,1234r 747,1282b 769,1290b 780,1287b 790,1275b 801,1245b 812,1228r 823,1260r 845,1299r 856,1285r 866,1285r 877,1257r 888,1243r 898,1270b 920,1292b 931,1281r 942,1285b 953,1257b 964,1248r 975,1267r 996,1293r 1007,1282b 1018,1281b 1029,1253b 1040,1245r 1050,1275b 1072,1297r 1082,1296r 1093,1292b 1104,1260r 1115,1254r 1126,1275b 1147,1296b 1158,1296b 1169,1293r 1180,1284b 1190,1292b 1202,1305r 1234,1293b',
  ylab: [[146, '0.855'], [333, '0.85'], [521, '0.845'], [711, '0.84'], [898, '0.835'], [977, '0.004', 1], [1101, '0.003', 1], [1232, '200.00K', 2], [1304, '0', 2]], tag: 262,
  xl: [], xc: [[477, 1334, '12'], [855, 1334, '19'], [1233, 1334, '26']],
  data: ['0.00', '01/15/10', '15:00:00', '0.00', '0.00', '0.00', '0.00', '0.0', '-1716', '-1716'] },
{ id: '120', name: '120:255', u: [34, 78, 2.8, 3], axis: 1323, start: 105, end: 1214,
  panes: [[78, 942], [953, 1184], [1193, 1315]], seps: [943, 1184], major: [[220, 361, 505, 649, 790], [1015, 1129], [1234]], minor: [[148, 292, 433, 577, 718, 862], [1072], [1276]],
  vmaj: [], vmin: [36, 474, 1202],
  up: '88,640 93,590 103,480 113,290 127,198 138,217 150,219 160,290 172,395 183,440 194,462 206,474 218,472 228,458 239,463 250,490 261,530 273,600 284,650 295,653 306,692 318,693 329,660 340,580 351,480 362,390 373,270 384,190 396,172 407,210 418,320 429,413 440,414 451,505 474,520 485,560 496,592 508,608 520,606 530,655 541,700 552,722 564,723 574,741 585,741 597,755 608,754 619,710 630,665 641,633 652,632 664,605 675,540 686,458 698,447 709,465 720,553 731,554 742,620 755,663 765,655 776,610 788,590 799,587 810,520 821,400 832,371 843,388 855,395 866,380 888,378 910,388 925,408 943,402 955,362 966,347 978,365 989,461 1011,466 1022,468 1033,420 1044,445 1056,465 1067,464 1078,455 1090,432 1104,415 1124,416 1135,455 1148,457 1158,480 1170,481 1181,468 1192,486 1203,460 1214,436',
  mid: '95,640 105,545 116,420 127,325 138,339 150,340 161,400 172,460 183,500 200,522 217,527 230,535 239,560 250,605 261,660 273,705 284,727 295,730 306,750 318,745 329,722 340,660 351,590 362,510 373,410 384,325 396,307 407,350 418,440 429,518 440,520 451,565 474,595 485,640 496,665 510,680 520,690 530,750 541,792 552,810 564,815 597,818 608,817 619,785 630,750 641,705 652,700 664,708 675,680 686,590 698,560 709,572 720,640 731,642 742,695 757,726 765,710 776,655 788,630 799,605 810,560 821,515 832,497 843,500 855,487 866,455 880,440 890,430 908,440 925,453 943,450 955,425 966,420 978,490 989,568 1000,593 1011,562 1022,560 1033,503 1044,510 1056,535 1067,535 1080,517 1100,517 1115,533 1124,524 1135,533 1170,537 1181,532 1192,550 1203,545 1214,520',
  low: '100,690 105,640 116,530 127,458 150,463 160,505 172,535 183,553 200,563 217,580 228,610 240,655 250,700 261,765 273,802 284,806 306,806 318,792 329,770 340,730 351,650 362,560 373,500 384,460 396,440 407,490 418,560 429,622 440,625 460,640 474,670 485,700 496,735 508,745 520,790 530,830 541,880 552,887 564,897 575,892 588,889 600,875 610,865 620,845 630,815 641,780 653,765 665,806 675,790 686,720 698,672 709,678 720,738 736,740 745,755 755,790 765,788 776,745 790,705 799,690 810,665 821,650 832,630 844,618 855,580 866,522 878,520 888,482 905,484 920,500 935,498 945,492 968,492 978,570 989,670 1000,728 1011,652 1023,650 1033,585 1044,573 1056,608 1067,612 1078,578 1090,590 1100,605 1112,648 1124,630 1135,620 1148,602 1160,595 1181,594 1192,612 1203,630 1212,600',
  spikes: {127:[162,375],138:[200,490],150:[298,520],116:[220,500],239:[424,640],284:[690,833],384:[127,485],396:[160,380],407:[210,490],418:[250,628],552:[725,920],564:[700,890],586:[785,905],675:[490,905],698:[360,620],709:[460,755],765:[645,805],821:[348,620],832:[340,540],867:[360,470],967:[318,420],989:[430,770],1000:[610,765],1011:[370,650],1101:[450,698],1112:[380,610],1157:[418,600],1202:[480,678],1214:[445,635],1225:[385,490]},
  drawn: [],
  atr: '247,1085 262,1065 273,1056 284,1067 293,1088 318,1089 329,1109 351,1107 363,1119 373,1100 385,1045 396,1038 408,1027 418,982 429,1010 440,1034 462,1035 474,1050 485,1056 496,1088 508,1095 521,1094 530,1077 541,1095 553,1083 564,1080 585,1100 608,1101 620,1118 631,1106 643,1104 653,1125 664,1125 676,1057 687,1053 710,1028 731,1057 753,1059 777,1069 790,1103 810,1131 821,1093 832,1056 855,1052 866,1062 877,1087 900,1089 911,1100 922,1122 933,1145 956,1157 967,1140 978,1137 989,1075 1000,1076 1011,1048 1023,1070 1045,1072 1068,1079 1078,1093 1090,1115 1101,1088 1112,1069 1124,1058 1135,1064 1145,1088 1158,1092 1168,1112 1192,1112 1203,1100 1214,1095 1225,1111',
  vol: '250,1257r 261,1242b 273,1225r 284,1248b 295,1279r 317,1287b 329,1302r 340,1290b 351,1290b 362,1293b 373,1267b 384,1242b 396,1250r 407,1234b 418,1219r 429,1245r 440,1279r 463,1293r 474,1299r 485,1287r 496,1287r 508,1296b 519,1281r 530,1257b 541,1257b 552,1248r 564,1240r 575,1260b 586,1282r 608,1296b 620,1301r 631,1285b 642,1288r 653,1296b 664,1279r 676,1251b 687,1269b 698,1254r 709,1245r 720,1262r 732,1272r 754,1293b 765,1299r 777,1287b 788,1296b 799,1293b 810,1278b 821,1251b 832,1259r 844,1248r 855,1245r 866,1267b 877,1290b 900,1296r 911,1304r 922,1296r 933,1299b 944,1296b 955,1290b 967,1257r 978,1267r 989,1251r 1000,1259b 1011,1260b 1023,1294r 1045,1299r 1056,1302r 1067,1302b 1078,1302b 1090,1305b 1101,1290r 1112,1293b 1124,1284b 1135,1290b 1146,1304r 1157,1308r 1168,1311r 1202,1301r 1213,1293b 1225,1302b',
  ylab: [[218, '0.854'], [359, '0.852'], [504, '0.85'], [648, '0.848'], [788, '0.846'], [1013, '0.003', 1], [1127, '0.002', 1], [1232, '100.00K', 2], [1310, '0', 2]], tag: 390,
  xl: [], xc: [[474, 1340, '19'], [1202, 1340, '26']],
  data: ['0.00', '01/15/10', '15:00:00', '0.00', '0.00', '0.00', '0.00', '0.0', '-3186', '-3186'] },
{ id: '60', name: '60:255', u: [37, 90, 2.851, 3], axis: 1324, start: 107, end: 1204,
  panes: [[90, 948], [959, 1190], [1200, 1321]], seps: [949, 1190], major: [[196, 388, 580, 772], [976, 1048, 1120], [1228]], minor: [[292, 484, 676, 868], [1012, 1084, 1156], [1273]],
  vmaj: [], vmin: [39, 1167],
  up: '101,640 107,590 118,560 130,580 141,598 152,609 164,592 175,592 186,533 198,510 209,415 220,365 232,268 243,280 254,350 266,430 277,440 289,475 300,540 311,615 323,650 334,642 346,641 357,605 368,575 380,523 391,515 403,512 420,492 437,485 448,450 460,355 471,243 484,212 495,245 506,284 517,275 528,288 543,288 552,272 562,240 574,209 585,225 608,240 643,240 654,260 666,278 678,290 688,277 700,245 711,215 722,181 734,177 745,177 757,210 768,235 780,330 791,420 802,508 813,430 825,330 836,268 848,292 860,300 872,315 893,335 904,345 915,355 928,355 940,335 951,310 962,297 973,296 985,322 995,308 1007,270 1018,249 1030,285 1042,310 1054,332 1065,342 1077,370 1088,392 1098,360 1110,368 1130,390 1168,394 1179,360 1190,330 1201,285 1213,265 1224,265',
  mid: '200,620 209,530 220,430 232,378 243,390 254,470 266,540 278,550 290,570 300,630 311,685 323,703 346,702 358,675 368,640 380,585 391,557 403,549 440,545 450,510 460,440 471,375 482,355 495,368 506,385 517,378 528,385 540,372 552,352 562,305 574,277 597,275 610,297 630,303 643,298 655,310 668,332 680,338 690,325 702,300 711,275 722,256 737,260 745,280 757,302 768,340 780,440 791,560 802,620 813,550 825,430 836,378 848,355 860,365 871,377 885,405 896,435 905,450 928,450 940,405 951,378 962,355 973,388 985,445 995,458 1007,415 1020,390 1031,400 1042,422 1065,428 1088,446 1098,432 1122,440 1135,447 1158,448 1168,468 1180,465 1191,410 1201,360 1213,312',
  low: '205,680 210,630 221,525 232,488 243,512 254,600 266,650 278,651 290,660 300,720 311,755 323,752 346,762 358,762 368,735 380,675 391,620 403,598 426,592 437,607 448,585 460,540 471,512 482,498 495,487 508,485 517,470 530,493 540,445 552,438 562,380 574,350 585,325 597,323 610,355 620,355 631,370 643,346 655,358 668,378 680,390 692,388 702,365 711,340 722,332 735,350 745,378 757,395 768,435 780,560 791,660 802,730 813,680 825,580 836,480 848,422 860,430 871,445 885,480 896,535 906,552 918,548 928,530 940,480 951,440 962,405 973,465 985,550 995,604 1007,555 1018,528 1030,520 1042,525 1065,518 1077,513 1088,497 1110,500 1135,503 1158,500 1168,540 1180,568 1191,525 1201,440 1213,360',
  spikes: {107:[560,640],118:[523,640],175:[550,640],198:[420,640],232:[252,480],243:[195,530],266:[485,725],289:[435,630],300:[640,750],346:[580,752],357:[640,792],471:[178,445],484:[165,550],517:[285,552],528:[255,430],562:[195,405],620:[240,420],734:[138,355],745:[195,390],791:[445,743],802:[560,735],825:[207,600],916:[340,580],984:[330,647],996:[370,638],1007:[240,470],1018:[225,485],1030:[285,572],1065:[330,543],1110:[275,498],1145:[320,490],1179:[430,620],1190:[340,545],1213:[228,372],1224:[253,315]},
  drawn: [],
  atr: '255,1010 266,1004 280,1015 302,1027 312,1048 335,1102 346,1098 357,1110 368,1098 391,1118 403,1138 414,1149 437,1152 448,1149 460,1138 471,1100 483,1039 495,1039 506,1052 517,1035 528,1043 541,1046 550,1065 562,1060 575,1083 586,1097 597,1115 608,1135 620,1124 631,1135 656,1149 666,1160 680,1165 692,1164 703,1158 723,1157 734,1132 745,1118 757,1103 768,1106 780,1068 791,1043 814,1047 825,995 836,1025 848,1047 860,1062 872,1083 882,1088 895,1075 916,1064 928,1065 945,1085 962,1112 973,1118 985,1068 996,1042 1007,1018 1030,987 1042,1014 1063,1015 1076,1040 1088,1068 1100,1088 1110,1077 1122,1098 1133,1123 1145,1116 1156,1130 1167,1142 1179,1102 1190,1081 1201,1102 1213,1108 1224,1131',
  vol: '255,1245r 266,1239b 278,1250b 289,1272r 300,1263r 312,1285r 323,1297b 335,1299r 346,1308b 357,1299r 369,1281b 380,1291r 391,1300b 403,1300r 414,1296b 426,1296b 437,1285r 448,1272b 460,1260b 471,1236b 483,1248r 494,1263b 506,1266r 517,1224b 528,1236r 540,1242b 551,1251r 562,1281b 574,1290r 585,1290b 597,1297r 608,1305b 620,1311r 631,1305b 642,1300r 654,1302r 665,1305r 677,1296b 688,1305r 699,1293r 711,1296b 722,1285b 734,1245b 745,1263r 756,1260r 768,1267b 780,1257r 791,1236r 802,1254r 813,1263b 825,1236b 836,1276r 848,1293b 859,1302r 870,1302r 882,1302r 893,1308r 904,1308r 916,1305b 927,1305r 939,1302b 950,1308b 962,1311b 973,1308r 985,1296r 996,1293b 1007,1302b 1019,1287r 1030,1281b 1042,1287r 1053,1293b 1065,1293r 1076,1307r 1087,1311r 1099,1311r 1110,1317b 1122,1317b 1145,1317b 1179,1290r 1190,1293b 1202,1302r 1213,1302b 1225,1314r',
  ylab: [[194, '0.852'], [387, '0.85'], [578, '0.848'], [770, '0.846'], [974, '0.0025', 1], [1046, '0.002', 1], [1118, '0.0015', 1], [1226, '50.00K', 2], [1315, '0', 2]], tag: 243,
  xl: [], xc: [[1166, 1347, '26']],
  data: ['0.00', '01/15/10', '16:00:00', '0.00', '0.00', '0.00', '0.00', '0.0', '-5818', '-5883'] }
];

const pts = s => s.split(' ').map(p => p.split(',').map(Number));
const at = (line, x) => {
  for (let i = 1; i < line.length; i++) if (x <= line[i][0]) {
    const [a, b] = line[i - 1], [c, d] = line[i];
    return b + (d - b) * Math.max(0, (x - a) / (c - a));
  }
  return line[line.length - 1][1];
};

function plot(c) {
  const [ox, oy, sx, sy] = c.u;
  const X = v => Math.round((v - ox) / sx), Y = v => Math.round((v - oy) / sy);
  const ax = X(c.axis);
  const path = (d, color, w = 1, extra = '') => `<path d="${d}" fill="none" stroke="${color}" stroke-width="${w}" ${extra}/>`;
  const poly = (s, color) => path('M' + pts(s).map(p => X(p[0]) + ' ' + Y(p[1])).join('L'), color, 2);
  let o = '<defs>' + c.panes.map((p, i) => `<clipPath id="p${c.id}${i}"><rect x="0" y="${Y(p[0])}" width="900" height="${Y(p[1]) - Y(p[0])}"/></clipPath>`).join('') + '</defs>';

  // dotted grid
  let h = '', v = '', dots = '';
  c.panes.forEach(([t, b], i) => {
    c.major[i].forEach(y => h += `M0 ${Y(y) + .5}H${ax}`);
    c.vmaj.forEach(x => v += `M${X(x) + .5} ${Y(t)}V${Y(b)}`);
    c.vmin.forEach(x => [...c.minor[i], t + 3, b - 3].forEach(y => dots += `M${X(x)} ${Y(y) + .5}h1`));
    c.minor[i].forEach(y => dots += `M${ax - 2} ${Y(y) + .5}h2`);
  });
  o += path(h, 'maroon', 1, 'stroke-dasharray="1 3"') + path(v, 'maroon', 1, 'stroke-dasharray="1 2"') + path(dots, 'maroon');
  if (c.solid) c.panes.forEach(([t, b]) => o += path(`M${X(c.solid) + .5} ${Y(t)}V${Y(b)}`, 'gray'));

  // price bars, four pixels apart
  const up = pts(c.up), low = pts(c.low), step = 4 * sx;
  let bars = '', n = 0;
  const bar = (x, hi, lo) => {
    const px = X(x), r = (n * 7 + 3) % 10 / 10, q = (n * 3 + 1) % 10 / 10;
    bars += `M${px + .5} ${Y(hi)}V${Y(lo)}M${px - 1} ${Y(hi + (lo - hi) * (.2 + r * .6)) + .5}h1M${px + 1} ${Y(hi + (lo - hi) * (.2 + q * .6)) + .5}h2`;
    n++;
  };
  const keys = Object.keys(c.spikes).map(Number);
  for (let x = c.start; x <= c.end + step * .4; x += step) {
    if (keys.some(k => Math.abs(k - x) <= step / 2)) { n++; continue; }
    const u = at(up, x), l = at(low, x), g = l - u;
    bar(x, u + g * (((n * 37) % 11) / 11 * .45 - .12), l - g * (((n * 53) % 13) / 13 * .4 - .1));
  }
  keys.forEach(k => bar(k, ...c.spikes[k]));
  o += `<g clip-path="url(#p${c.id}0)">` + poly(c.up, 'maroon') + poly(c.mid, 'teal') + poly(c.low, 'red') + path(bars, 'teal');
  c.drawn.forEach(([col, s]) => o += poly(s, col));
  o += '</g>' + `<g clip-path="url(#p${c.id}1)">` + poly(c.atr, 'maroon') + '</g>';

  // volume
  const base = Y(c.panes[2][1]);
  c.vol.split(' ').forEach(s => {
    const [x, t] = s.slice(0, -1).split(',').map(Number);
    o += `<rect x="${X(x)}" y="${Y(t)}" width="1" height="${base - Y(t)}" fill="${s.endsWith('r') ? 'red' : '#000'}"/>`;
  });

  // pane frames and axes
  c.seps.forEach(y => o += path(`M0 ${Y(y) + .5}H900`, '#d4d0c8'));
  o += path(`M0 ${Y(c.panes[1][0]) - .5}H900M0 ${Y(c.panes[2][0]) - .5}H900M0 ${base + .5}H900`, '#000');
  c.panes.forEach(([t, b]) => o += path(`M${ax + .5} ${Y(t)}V${Y(b)}`, '#000'));
  c.ylab.forEach(([y, t, p = 0]) => o += `<g clip-path="url(#p${c.id}${p})"><text x="${ax + 1}" y="${Y(y) + 5}">${t}</text></g>`);
  o += `<rect x="${ax + 1}" y="${Y(c.tag)}" width="400" height="18" fill="teal"/><text x="${ax + 1}" y="${Y(c.tag) + 14}" fill="#fff">0.85123</text>`;
  c.xl.forEach(([x, y, t]) => o += `<text x="${X(x)}" y="${Y(y) + 5}">${t}</text>`);
  c.xc.forEach(([x, y, t]) => o += `<text x="${X(x)}" y="${Y(y) + 5}" text-anchor="middle">${t}</text>`);
  return `<svg class="plot">${o}</svg>`;
}

function dataWindow(c) {
  const b = c.bands || ['0.00', '0.00', '0.00', '0.00'];
  const rows = c.data.map(v => ['', '', v]);
  rows.push(['m', '1)', b[0]], ['', '1)', b[1]], ['r', '1)', b[2]], ['m', '0,0)', b[3]], ['b', '', c.last || '0']);
  return `<table class="data at-182">${rows.map(r => `<tr class="${r[0]}"><th>${r[1]}</th><td>${r[2]}</td></tr>`).join('')}</table>`;
}

const icon = '<svg class="win-icon" viewBox="0 0 16 16" shape-rendering="crispEdges"><path d="M0 0h16v16H0z" fill="#000"/><path d="M1 1h12v14H1zM14 1h1v2h-1zM14 5h1v2h-1zM14 9h1v2h-1zM14 13h1v2h-1z" fill="#fff"/><path d="M3.500 4v8M1 5h2M4 11h2M6.500 6v7M7 12h1M8.500 4v7M9 5h1M11.500 2v7M10 8h1M12 3h1" stroke="#000"/></svg>';
document.getElementById('desktop').insertAdjacentHTML('beforeend', charts.map(c => `
<section class="win win-${c.id}">
  <header class="win-title${c.active ? ' active' : ''}">${icon}<h2>FX:EURGBP A0-FX,${c.name} -- EURO/UK STERLING</h2>
    <button class="link"><i></i>Sym</button><button class="link off"><i></i>Intv</button>
    <button class="cap" aria-label="Minimize"><b class="g-min"></b></button><button class="cap" aria-label="Maximize"><b class="g-max"></b></button><button class="cap close" aria-label="Close"><svg viewBox="0 0 9 9"><path d="M1 1l7 7M8 1L1 8"/></svg></button>
  </header>
  <div class="client">${plot(c)}${c.caption ? `<div class="caption">${c.caption}</div>` : ''}${dataWindow(c)}</div>
</section>`).join(''));
```
